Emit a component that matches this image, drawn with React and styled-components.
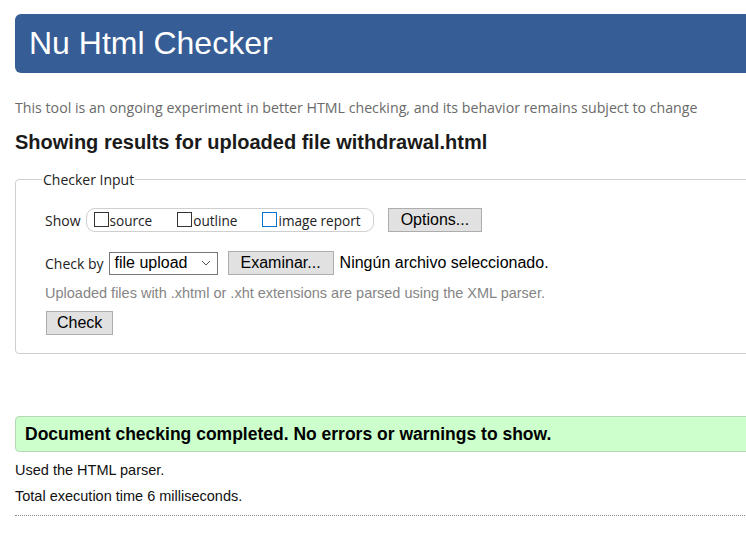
import styled, { createGlobalStyle, css } from "styled-components";

const GlobalStyle = createGlobalStyle`
  html, body {
    margin: 0;
    padding: 0;
    background: #fff;
    overflow: hidden;
  }
  body {
    font-family: "Liberation Sans", Arial, sans-serif;
    color: #000;
  }
`;

const Page = styled.div`
  width: 800px;
  padding: 14px 0 0 15px;
`;

const Header = styled.header`
  height: 59px;
  background: #365d95;
  border-radius: 6px 0 0 6px;
  padding-left: 14px;
`;

const Title = styled.h1`
  margin: 0;
  font: 400 32px/59px "Liberation Sans", Arial, sans-serif;
  color: #fff;
`;

const Intro = styled.p`
  margin: 25px 0 0;
  font: 400 14.2px/20px "Open Sans", sans-serif;
  color: #6a6a6a;
`;

const Results = styled.h2`
  margin: 12px 0 0;
  font: 700 20px/24px "Liberation Sans", Arial, sans-serif;
  color: #1a1a1a;
`;

const Fieldset = styled.fieldset`
  margin: 16px 0 0;
  padding: 7px 0 17px 29px;
  border: 1px solid #cfcfcf;
  border-radius: 4px;
  min-width: 0;
`;

const Legend = styled.legend`
  margin-left: -3px;
  padding: 0 1px;
  font: 400 14px/19px "Open Sans", sans-serif;
  color: #222;
`;

const Row = styled.div`
  display: flex;
  align-items: center;
  height: 26px;
  margin-top: ${(p) => p.$top || 0}px;
`;

const Label = styled.span`
  font: 400 14px "Open Sans", sans-serif;
  color: #222;
  margin-right: 5px;
`;

const Pill = styled.div`
  display: flex;
  align-items: center;
  gap: 25px;
  height: 22px;
  padding: 0 12px 0 7px;
  border: 1px solid #cfcfcf;
  border-radius: 9px;
`;

const Option = styled.label`
  display: flex;
  align-items: center;
  gap: 1px;
  font: 400 13.6px "Open Sans", sans-serif;
  color: #222;
`;

const Box = styled.span`
  display: inline-block;
  box-sizing: border-box;
  width: 15px;
  height: 15px;
  margin-top: -2px;
  border: 1px solid #333;
  ${(p) =>
    p.$focus &&
    css`
      border-color: #0a74d0;
    `}
`;

const Button = styled.button`
  box-sizing: border-box;
  height: 24px;
  margin-left: ${(p) => p.$gap || 0}px;
  padding: 0 ${(p) => p.$pad || 12}px;
  background: #e1e1e1;
  border: 1px solid #adadad;
  border-radius: 0;
  font: 400 16px "Liberation Sans", Arial, sans-serif;
  color: #000;
`;

const Select = styled.div`
  box-sizing: border-box;
  display: flex;
  align-items: center;
  justify-content: space-between;
  width: 109px;
  height: 23px;
  padding: 0 6px 0 5px;
  border: 1px solid #767676;
  font: 400 16px "Liberation Sans", Arial, sans-serif;
`;

const FileName = styled.span`
  margin-left: 6px;
  font: 400 16px "Liberation Sans", Arial, sans-serif;
`;

const Hint = styled.p`
  margin: 7px 0 0;
  font: 400 14.5px/20px "Liberation Sans", Arial, sans-serif;
  color: #858585;
`;

const Success = styled.div`
  box-sizing: border-box;
  margin-top: 62px;
  height: 36px;
  padding-left: 9px;
  display: flex;
  align-items: center;
  background: #ccffcc;
  border: 1px solid #b5d9b5;
  border-radius: 4px 0 0 4px;
  font: 700 17.5px "Liberation Sans", Arial, sans-serif;
  color: #000;
`;

const Note = styled.p`
  margin: ${(p) => p.$top}px 0 0;
  font: 400 14.5px/20px "Liberation Sans", Arial, sans-serif;
  color: #111;
`;

const Rule = styled.hr`
  margin: 9px 0 0;
  border: 0;
  border-top: 1px dotted #888;
`;

function Chevron() {
  return (
    <svg width="10" height="6" viewBox="0 0 10 6" fill="none">
      <path d="M1 1l4 4 4-4" stroke="#555" strokeWidth="1" />
    </svg>
  );
}

export default function App() {
  return (
    <Page>
      <GlobalStyle />
      <Header>
        <Title>Nu Html Checker</Title>
      </Header>
      <Intro>
        This tool is an ongoing experiment in better HTML checking, and its
        behavior remains subject to change
      </Intro>
      <Results>Showing results for uploaded file withdrawal.html</Results>

      <Fieldset>
        <Legend>Checker Input</Legend>
        <Row $top={11}>
          <Label>Show</Label>
          <Pill>
            <Option>
              <Box />
              source
            </Option>
            <Option>
              <Box />
              outline
            </Option>
            <Option>
              <Box $focus />
              image report
            </Option>
          </Pill>
          <Button $gap={14}>Options...</Button>
        </Row>
        <Row $top={17}>
          <Label>Check by</Label>
          <Select>
            file upload
            <Chevron />
          </Select>
          <Button $gap={10}>Examinar...</Button>
          <FileName>Ningún archivo seleccionado.</FileName>
        </Row>
        <Hint>
          Uploaded files with .xhtml or .xht extensions are parsed using the
          XML parser.
        </Hint>
        <Row $top={7}>
          <Button $gap={1} $pad={10}>Check</Button>
        </Row>
      </Fieldset>

      <Success>Document checking completed. No errors or warnings to show.</Success>
      <Note $top={8}>Used the HTML parser.</Note>
      <Note $top={6}>Total execution time 6 milliseconds.</Note>
      <Rule />
    </Page>
  );
}
